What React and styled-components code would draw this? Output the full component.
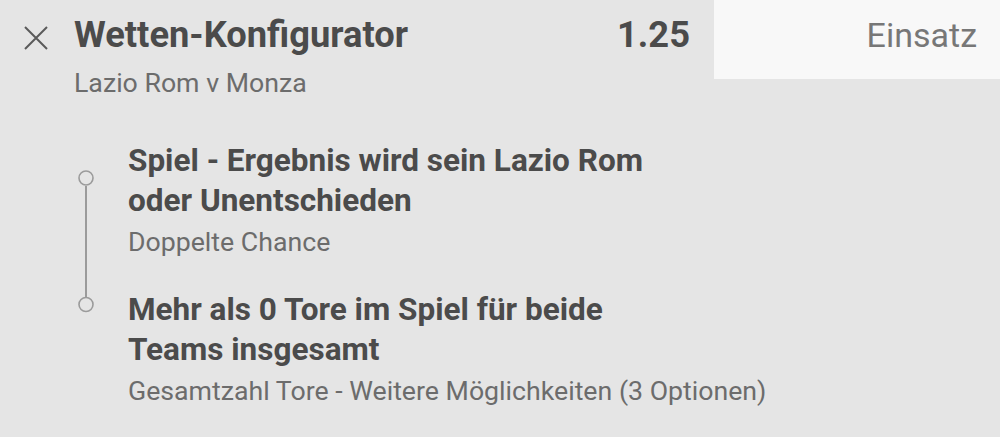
import React from "react";
import styled, { createGlobalStyle } from "styled-components";

const Global = createGlobalStyle`
  html, body {
    margin: 0;
    padding: 0;
    background: #e5e5e5;
  }
  body {
    font-family: Roboto, "Noto Sans", "Liberation Sans", sans-serif;
    -webkit-font-smoothing: antialiased;
  }
`;

const Page = styled.div`
  width: 1000px;
  height: 437px;
  background: #e5e5e5;
  overflow: hidden;
`;

const Header = styled.header`
  display: flex;
  align-items: flex-start;
`;

const CloseButton = styled.button`
  flex: none;
  width: 74px;
  height: 79px;
  margin: 0;
  padding: 26px 0 0 24px;
  border: 0;
  background: transparent;
  display: flex;
  align-items: flex-start;
  cursor: pointer;
`;

const TitleBlock = styled.div`
  flex: 1;
  padding-top: 13px;
`;

const Title = styled.h1`
  margin: 0;
  font-size: 36.3px;
  line-height: 44px;
  font-weight: 700;
  color: #4b4b4b;
`;

const Subtitle = styled.div`
  margin-top: 8px;
  font-size: 26.7px;
  line-height: 36px;
  color: #6c6c6c;
`;

const Odds = styled.div`
  flex: none;
  padding-top: 13px;
  margin-right: 24px;
  font-size: 36.3px;
  line-height: 44px;
  font-weight: 700;
  color: #4b4b4b;
`;

const StakeBox = styled.div`
  flex: none;
  width: 286px;
  height: 79px;
  box-sizing: border-box;
  background: #f8f8f8;
  padding: 13px 23px 0 0;
  text-align: right;
  font-size: 34px;
  line-height: 44px;
  color: #777777;
`;

const Body = styled.section`
  display: flex;
  align-items: flex-start;
  padding-top: 40px;
`;

const Rail = styled.svg`
  flex: none;
  width: 128px;
  height: 160px;
  margin-top: 19px;
`;

const Selections = styled.div`
  display: flex;
  flex-direction: column;
  gap: 30px;
`;

const Selection = styled.div`
  display: flex;
  flex-direction: column;
`;

const SelectionName = styled.div`
  font-size: 31.5px;
  line-height: 40px;
  font-weight: 700;
  color: #4b4b4b;
  max-width: 560px;
`;

const Market = styled.div`
  margin-top: 3px;
  font-size: 26.7px;
  line-height: 36px;
  color: #6c6c6c;
`;

const selections = [
  {
    name: "Spiel - Ergebnis wird sein Lazio Rom oder Unentschieden",
    market: "Doppelte Chance",
  },
  {
    name: "Mehr als 0 Tore im Spiel für beide Teams insgesamt",
    market: "Gesamtzahl Tore - Weitere Möglichkeiten (3 Optionen)",
  },
];

export default function App() {
  return (
    <Page>
      <Global />
      <Header>
        <CloseButton aria-label="Schließen">
          <svg width="24" height="24" viewBox="0 0 24 24">
            <path
              d="M1 1 L23 23 M23 1 L1 23"
              stroke="#5a5a5a"
              strokeWidth="2"
              fill="none"
            />
          </svg>
        </CloseButton>
        <TitleBlock>
          <Title>Wetten-Konfigurator</Title>
          <Subtitle>Lazio Rom v Monza</Subtitle>
        </TitleBlock>
        <Odds>1.25</Odds>
        <StakeBox>Einsatz</StakeBox>
      </Header>
      <Body>
        <Rail viewBox="0 0 128 160">
          <line x1="86" y1="26" x2="86" y2="137" stroke="#9b9b9b" strokeWidth="2" />
          <circle cx="86" cy="18" r="7" fill="none" stroke="#9b9b9b" strokeWidth="1.6" />
          <circle cx="86" cy="144.5" r="7" fill="none" stroke="#9b9b9b" strokeWidth="1.6" />
        </Rail>
        <Selections>
          {selections.map((s) => (
            <Selection key={s.market}>
              <SelectionName>{s.name}</SelectionName>
              <Market>{s.market}</Market>
            </Selection>
          ))}
        </Selections>
      </Body>
    </Page>
  );
}
